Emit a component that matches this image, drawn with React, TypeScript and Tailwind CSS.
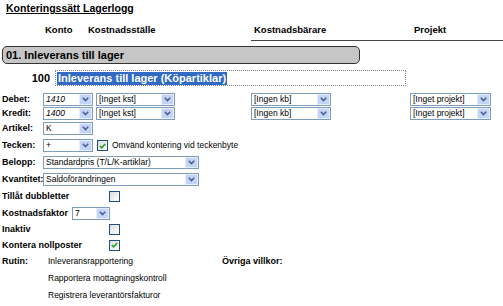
import React from "react";

const font = "font-['Liberation_Sans',Arial,sans-serif]";

const Select = ({
  text,
  width,
  italic,
  className = "",
}: {
  text: string;
  width: number;
  italic?: boolean;
  className?: string;
}) => {
  return (
    <div
      className={`flex h-[13px] shrink-0 items-stretch border border-[#7f9db9] bg-white ${className}`}
      style={{ width }}
    >
      <div
        className={`flex-1 overflow-hidden whitespace-nowrap pl-[2px] text-[8.5px] leading-[11px] text-black ${
          italic ? "italic" : ""
        }`}
      >
        {text}
      </div>
      <div className="flex w-[13px] items-center justify-center border border-[#e6eefc] bg-[#c3d3fb]">
        <svg width="7" height="5" viewBox="0 0 7 5">
          <path d="M0.8 0.8 L3.5 3.6 L6.2 0.8" fill="none" stroke="#4d6185" strokeWidth="1.6" />
        </svg>
      </div>
    </div>
  );
};

const Checkbox = ({ checked, className = "" }: { checked?: boolean; className?: string }) => {
  return (
    <div
      className={`flex h-[11px] w-[11px] shrink-0 items-center justify-center border border-[#1c5180] bg-gradient-to-br from-[#dcdcd7] to-white ${className}`}
    >
      {checked && (
        <svg width="7" height="6" viewBox="0 0 7 6">
          <path d="M0.8 3 L2.7 4.8 L6.2 1" fill="none" stroke="#21a121" strokeWidth="1.6" />
        </svg>
      )}
    </div>
  );
};

const Label = ({ children, width = 43 }: { children: React.ReactNode; width?: number }) => (
  <div className="shrink-0 pl-[2px] text-[9px] font-bold leading-none text-black" style={{ width }}>
    {children}
  </div>
);

const Row = ({ h, children }: { h: number; children: React.ReactNode }) => (
  <div className="flex items-center" style={{ height: h }}>
    {children}
  </div>
);

export default function App() {
  return (
    <div className={`h-[306px] w-[503px] overflow-hidden bg-white text-black ${font}`}>
      {/* rubrik */}
      <div className="h-[20px] pl-[6px] pt-[3px] text-[10.5px] font-bold leading-none underline">
        Konteringssätt Lagerlogg
      </div>

      {/* kolumnrubriker */}
      <div className="flex h-[21px] items-end text-[9.5px] font-bold leading-none">
        <div className="w-[45px]" />
        <div className="w-[43px] pb-[7px]">Konto</div>
        <div className="w-[163px] pb-[7px]">Kostnadsställe</div>
        <div className="flex flex-1 border-b border-[#444] pb-[6px] pl-[3px]">
          <div className="w-[160px]">Kostnadsbärare</div>
          <div>Projekt</div>
        </div>
      </div>

      {/* grå rubrikrad */}
      <div className="ml-[2px] mt-[5px] flex h-[18px] w-[358px] items-center rounded-[5px] border border-[#333] bg-[#c6c6c6] pl-[3px] text-[11px] font-bold leading-none">
        01. Inleverans till lager
      </div>

      <div className="mt-[6px] flex h-[16px] items-center">
        <div className="w-[51px] pr-[1px] text-right text-[11px] font-bold leading-none">100</div>
        <div className="ml-[4px] flex h-[16px] w-[351px] items-center border border-dotted border-[#888] pl-[1px]">
          <span className="bg-[#316ac5] px-[1px] text-[11px] font-bold leading-[13px] text-white">
            Inleverans till lager (Köpartiklar)
          </span>
        </div>
      </div>

      <div className="mt-[6px]">
        <Row h={14}>
          <Label>Debet:</Label>
          <Select text="1410" width={50} italic />
          <Select text="[Inget kst]" width={79} className="ml-[3px]" />
          <Select text="[Ingen kb]" width={80} className="ml-[76px]" />
          <Select text="[Inget projekt]" width={81} className="ml-[79px]" />
        </Row>
        <Row h={14}>
          <Label>Kredit:</Label>
          <Select text="1400" width={50} italic />
          <Select text="[Inget kst]" width={79} className="ml-[3px]" />
          <Select text="[Ingen kb]" width={80} className="ml-[76px]" />
          <Select text="[Inget projekt]" width={81} className="ml-[79px]" />
        </Row>
        <Row h={17}>
          <Label>Artikel:</Label>
          <Select text="K" width={50} />
        </Row>
        <Row h={17}>
          <Label>Tecken:</Label>
          <Select text="+" width={50} />
          <Checkbox checked className="ml-[4px]" />
          <span className="ml-[4px] text-[8.5px] leading-none">Omvänd kontering vid teckenbyte</span>
        </Row>
        <Row h={17}>
          <Label>Belopp:</Label>
          <Select text="Standardpris (T/L/K-artiklar)" width={156} />
        </Row>
        <Row h={17}>
          <Label>Kvantitet:</Label>
          <Select text="Saldoförändringen" width={156} />
        </Row>
        <Row h={17}>
          <Label width={109}>Tillåt dubbletter</Label>
          <Checkbox />
        </Row>
        <Row h={16}>
          <Label width={72}>Kostnadsfaktor</Label>
          <Select text="7" width={38} />
        </Row>
        <Row h={16}>
          <Label width={109}>Inaktiv</Label>
          <Checkbox />
        </Row>
        <Row h={16}>
          <Label width={109}>Kontera nollposter</Label>
          <Checkbox checked />
        </Row>
        <Row h={17}>
          <Label width={48}>Rutin:</Label>
          <div className="w-[174px] text-[8.5px] leading-none">Inleveransrapportering</div>
          <div className="text-[9px] font-bold leading-none">Övriga villkor:</div>
        </Row>
        <Row h={17}>
          <div className="w-[48px]" />
          <div className="text-[8.5px] leading-none">Rapportera mottagningskontroll</div>
        </Row>
        <Row h={17}>
          <div className="w-[48px]" />
          <div className="text-[8.5px] leading-none">Registrera leverantörsfakturor</div>
        </Row>
      </div>
    </div>
  );
}
